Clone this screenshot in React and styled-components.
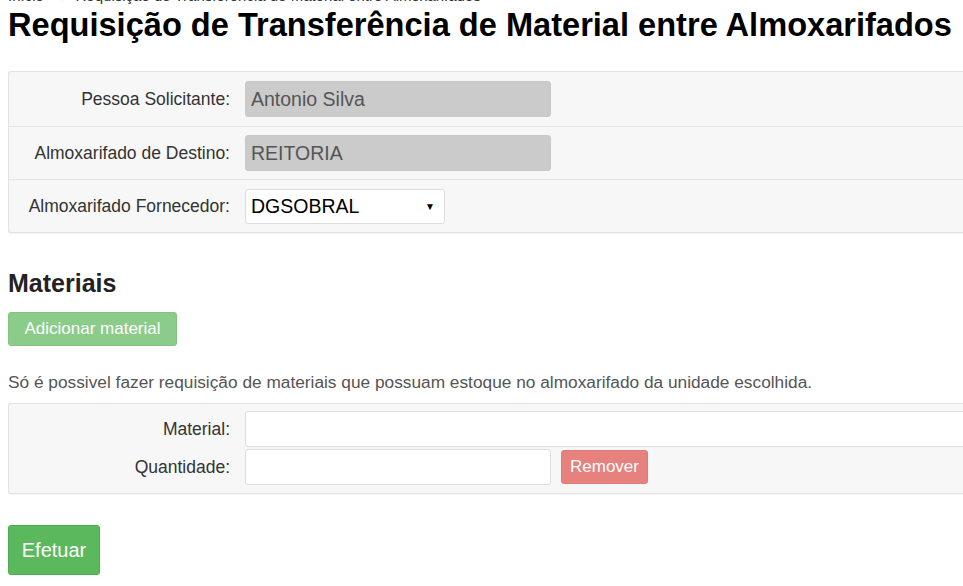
import React from "react";
import styled, { createGlobalStyle } from "styled-components";

const GlobalStyle = createGlobalStyle`
  html, body {
    margin: 0;
    padding: 0;
    background: #fff;
    overflow: hidden;
  }
  body {
    font-family: "Liberation Sans", Arial, sans-serif;
    color: #333;
  }
`;

const Page = styled.div`
  width: 1000px;
  padding: 0 0 0 8px;
  box-sizing: border-box;
`;

const Breadcrumb = styled.div`
  margin-top: -13px;
  height: 17px;
  font-size: 15px;
  color: #333;
  white-space: nowrap;
`;

const Title = styled.h1`
  margin: 1px 0 0;
  font-size: 32.6px;
  font-weight: 700;
  color: #000;
  line-height: 40px;
`;

const Panel = styled.div`
  margin-top: ${(p) => p.$top}px;
  background: #f7f7f7;
  border: 1px solid #e3e3e3;
  border-right: none;
  border-radius: 3px 0 0 3px;
  box-shadow: 0 1px 1px rgba(0, 0, 0, 0.05);
  padding: ${(p) => p.$pad || "0"};
`;

const Row = styled.div`
  box-sizing: border-box;
  display: flex;
  align-items: center;
  gap: 15px;
  height: ${(p) => p.$h || 53}px;
  border-top: ${(p) => (p.$first ? "none" : "1px solid #e5e5e5")};
`;

const Label = styled.label`
  width: 221px;
  text-align: right;
  font-size: 17.5px;
  color: #333;
  flex-shrink: 0;
`;

const Input = styled.div`
  box-sizing: border-box;
  width: ${(p) => p.$w}px;
  height: ${(p) => p.$h || 36}px;
  border: 1px solid ${(p) => (p.$disabled ? "#c8c8c8" : "#ddd")};
  border-radius: 3px;
  background: ${(p) => (p.$disabled ? "#cbcbcb" : "#fff")};
  color: ${(p) => (p.$disabled ? "#555" : "#000")};
  font-size: 19.5px;
  padding: 0 5px;
  display: flex;
  align-items: center;
  justify-content: space-between;
  flex-shrink: 0;
`;

const Caret = styled.span`
  font-size: 10px;
  margin-right: 4px;
`;

const SectionTitle = styled.h3`
  margin: 35px 0 0;
  font-size: 25px;
  font-weight: 700;
  color: #222;
  line-height: 30px;
`;

const Button = styled.button`
  box-sizing: border-box;
  font-family: "Liberation Sans", Arial, sans-serif;
  border: 1px solid ${(p) => p.$border};
  background: ${(p) => p.$bg};
  color: #fff;
  border-radius: 3px;
  font-size: ${(p) => p.$fs}px;
  width: ${(p) => p.$w}px;
  height: ${(p) => p.$h}px;
  padding: 0;
  cursor: pointer;
`;

const AddRow = styled.div`
  margin-top: 14px;
  height: 34px;
`;

const Help = styled.p`
  margin: 25px 0 0;
  font-size: 17.3px;
  color: #555;
  line-height: 22px;
`;

const ItemRows = styled.div`
  display: flex;
  flex-direction: column;
  gap: 2px;
`;

const ItemRow = styled.div`
  display: flex;
  align-items: center;
  gap: 15px;
`;

const Actions = styled.div`
  margin-top: 31px;
`;

export default function App() {
  return (
    <Page>
      <GlobalStyle />
      <Breadcrumb>
        Início &nbsp;→&nbsp; Requisição de Transferência de Material entre Almoxarifados
      </Breadcrumb>
      <Title>Requisição de Transferência de Material entre Almoxarifados</Title>
      <Panel $top={26}>
        <Row $first $h={54}>
          <Label>Pessoa Solicitante:</Label>
          <Input $w={306} $disabled>Antonio Silva</Input>
        </Row>
        <Row>
          <Label>Almoxarifado de Destino:</Label>
          <Input $w={306} $disabled>REITORIA</Input>
        </Row>
        <Row>
          <Label>Almoxarifado Fornecedor:</Label>
          <Input $w={200} $h={35}>
            DGSOBRAL
            <Caret>▼</Caret>
          </Input>
        </Row>
      </Panel>
      <SectionTitle>Materiais</SectionTitle>
      <AddRow>
        <Button $bg="#8bcc8b" $border="#80c680" $fs={17} $w={169} $h={34}>
          Adicionar material
        </Button>
      </AddRow>
      <Help>Só é possivel fazer requisição de materiais que possuam estoque no almoxarifado da unidade escolhida.</Help>
      <Panel $top={10} $pad="7px 0 8px">
        <ItemRows>
          <ItemRow>
            <Label>Material:</Label>
            <Input $w={760} />
          </ItemRow>
          <ItemRow>
            <Label>Quantidade:</Label>
            <Input $w={306} />
            <Button $bg="#e6817e" $border="#e27a77" $fs={17} $w={87} $h={34} style={{ marginLeft: -5 }}>
              Remover
            </Button>
          </ItemRow>
        </ItemRows>
      </Panel>
      <Actions>
        <Button $bg="#5cb85c" $border="#4cae4c" $fs={20} $w={92} $h={50}>
          Efetuar
        </Button>
      </Actions>
    </Page>
  );
}
